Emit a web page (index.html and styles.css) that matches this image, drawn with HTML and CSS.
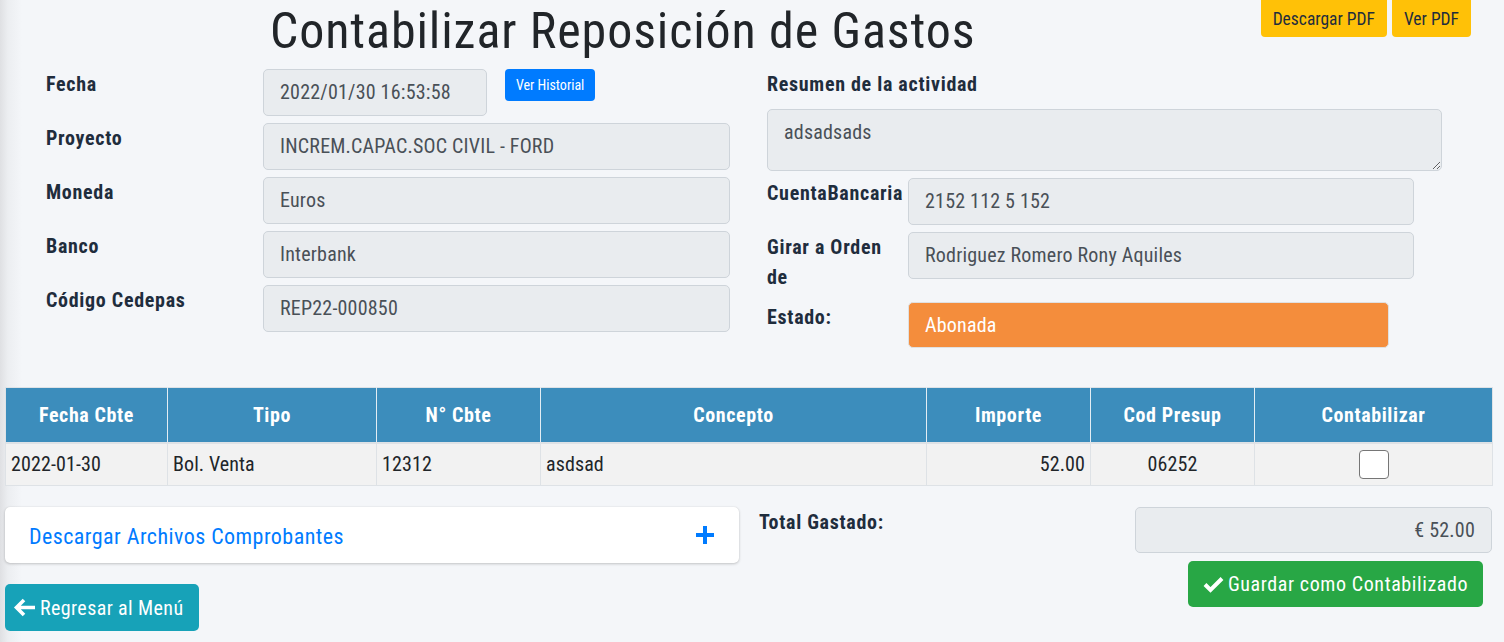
FILE: index.html
```html
<!DOCTYPE html>
<html lang="es">
<head>
<meta charset="utf-8">
<title>Contabilizar Reposición de Gastos</title>
<link rel="stylesheet" href="styles.css">
</head>
<body>
<div class="page">
  <header class="top">
    <h1 class="title">Contabilizar Reposición de Gastos</h1>
    <div class="pdf-actions">
      <button class="btn btn-warning">Descargar PDF</button>
      <button class="btn btn-warning">Ver PDF</button>
    </div>
  </header>

  <section class="form">
    <div class="col-left">
      <div class="row">
        <label class="lbl">Fecha</label>
        <div class="field-inline">
          <div class="input input-date">2022/01/30 16:53:58</div>
          <button class="btn btn-primary btn-xs">Ver Historial</button>
        </div>
      </div>
      <div class="row">
        <label class="lbl">Proyecto</label>
        <div class="input">INCREM.CAPAC.SOC CIVIL - FORD</div>
      </div>
      <div class="row">
        <label class="lbl">Moneda</label>
        <div class="input">Euros</div>
      </div>
      <div class="row">
        <label class="lbl">Banco</label>
        <div class="input">Interbank</div>
      </div>
      <div class="row">
        <label class="lbl">Código Cedepas</label>
        <div class="input">REP22-000850</div>
      </div>
    </div>

    <div class="col-right">
      <label class="lbl lbl-block">Resumen de la actividad</label>
      <textarea class="input textarea" readonly>adsadsads</textarea>
      <div class="row row-r">
        <label class="lbl">CuentaBancaria</label>
        <div class="input input-r">2152 112 5 152</div>
      </div>
      <div class="row row-r">
        <label class="lbl">Girar a Orden de</label>
        <div class="input input-r">Rodriguez Romero Rony Aquiles</div>
      </div>
      <div class="row row-r">
        <label class="lbl">Estado:</label>
        <div class="input input-estado">Abonada</div>
      </div>
    </div>
  </section>

  <table class="tbl">
    <colgroup>
      <col style="width:162px"><col style="width:209px"><col style="width:164px"><col style="width:386px"><col style="width:164px"><col style="width:164px"><col>
    </colgroup>
    <thead>
      <tr>
        <th>Fecha Cbte</th><th>Tipo</th><th>N° Cbte</th><th>Concepto</th><th>Importe</th><th>Cod Presup</th><th>Contabilizar</th>
      </tr>
    </thead>
    <tbody>
      <tr>
        <td>2022-01-30</td><td>Bol. Venta</td><td>12312</td><td>asdsad</td><td class="r">52.00</td><td class="c">06252</td><td class="c"><span class="check"></span></td>
      </tr>
    </tbody>
  </table>

  <section class="bottom">
    <div class="bottom-left">
      <div class="card">
        <span class="card-title">Descargar Archivos Comprobantes</span>
        <svg class="plus" width="18" height="18" viewBox="0 0 18 18"><path d="M9 0v18M0 9h18" stroke="#007bff" stroke-width="4"/></svg>
      </div>
      <button class="btn btn-info btn-lg">
        <svg width="24" height="19" viewBox="0 0 24 19"><path d="M22 9.5H4M11 2L3.5 9.5 11 17" fill="none" stroke="#fff" stroke-width="3.6" stroke-linejoin="miter"/></svg>
        Regresar al Menú
      </button>
    </div>
    <div class="bottom-right">
      <div class="total-row">
        <label class="lbl">Total Gastado:</label>
        <div class="input input-total">€ 52.00</div>
      </div>
      <div class="save-row">
        <button class="btn btn-success btn-lg">
          <svg width="21" height="17" viewBox="0 0 21 17"><path d="M2 8.5l5.5 5.5L19 2.5" fill="none" stroke="#fff" stroke-width="4"/></svg>
          Guardar como Contabilizado
        </button>
      </div>
    </div>
  </section>
</div>
</body>
</html>
```
FILE: styles.css
```css
html, body {
  margin: 0;
  height: 100%;
}
body {
  background: linear-gradient(to right, #dfe0e3 0, #eceef1 8px, #f4f6f9 22px);
  font-family: "Roboto Condensed", "Liberation Sans Narrow", "Liberation Sans", sans-serif;
  font-size: 20px;
  color: #212529;
}
.page {
  padding: 0 12px 0 5px;
}
.top {
  display: flex;
  justify-content: space-between;
  align-items: flex-start;
  height: 69px;
}
.title {
  margin: 0 0 0 265px;
  padding-top: 1px;
  font-size: 50px;
  font-weight: 400;
  line-height: 60px;
  color: #212529;
  letter-spacing: 0.9px;
}
.pdf-actions {
  display: flex;
  gap: 5px;
  margin-right: 21px;
}
.btn {
  border: 0;
  font-family: inherit;
  cursor: pointer;
  display: inline-flex;
  align-items: center;
  justify-content: center;
}
.btn-warning {
  background: #ffc107;
  color: #1f2d3d;
  font-size: 17.5px;
  height: 37px;
  padding: 0 12px;
  border-radius: 0 0 4px 4px;
}
.btn-primary {
  background: #007bff;
  color: #fff;
}
.btn-xs {
  font-size: 14px;
  height: 32px;
  padding: 0 11px;
  border-radius: 4px;
  margin-left: 18px;
}
.form {
  display: flex;
  padding-left: 41px;
  gap: 37px;
  height: 318px;
}
.col-left {
  width: 684px;
}
.col-right {
  width: 674px;
  display: flex;
  flex-direction: column;
}
.row {
  display: flex;
  align-items: flex-start;
}
.lbl {
  display: block;
  box-sizing: border-box;
  width: 217px;
  flex: none;
  font-weight: 700;
  line-height: 30px;
  margin-bottom: 10px;
  color: #1f2d3d;
  letter-spacing: 0.7px;
}
.row-r .lbl {
  width: 141px;
  padding-right: 16px;
  white-space: normal;
}
.lbl-block {
  width: auto;
}
.input {
  box-sizing: border-box;
  flex: 1;
  height: 47px;
  margin-bottom: 7px;
  background: #e9ecef;
  border: 1px solid #ced4da;
  border-radius: 5px;
  padding: 0 16px;
  color: #495057;
  line-height: 45px;
  white-space: nowrap;
  letter-spacing: 0.2px;
}
.field-inline {
  display: flex;
  align-items: flex-start;
  flex: 1;
}
.input-date {
  flex: none;
  width: 224px;
}
.textarea {
  flex: none;
  width: 675px;
  height: 62px;
  font-family: inherit;
  font-size: 20px;
  line-height: 30px;
  padding: 7px 16px;
  resize: vertical;
  outline: none;
}
.input-r {
  flex: none;
  width: 506px;
}
.input-estado {
  flex: none;
  width: 481px;
  height: 46px;
  background: #f48d3c;
  border-color: #e0e0e0;
  color: #fff;
  line-height: 44px;
}
.tbl {
  width: 1488px;
  border-collapse: collapse;
  table-layout: fixed;
  border: 1px solid #dee2e6;
}
.tbl th {
  background: #3c8dbc;
  color: #fff;
  font-weight: 700;
  height: 55px;
  padding: 0 5px;
  text-align: center;
  border-left: 1px solid #e3edf4;
  border-bottom: 2px solid #dee2e6;
  box-sizing: border-box;
  letter-spacing: 0.6px;
}
.tbl th:first-child {
  border-left: 0;
}
.tbl td {
  background: #f2f2f2;
  height: 43px;
  padding: 0 5px;
  border: 1px solid #dee2e6;
  box-sizing: border-box;
  color: #212529;
  letter-spacing: 0.1px;
}
.tbl td.r { text-align: right; }
.tbl td.c { text-align: center; }
.check {
  display: inline-block;
  width: 28px;
  height: 27px;
  background: #fff;
  border: 1px solid #767676;
  border-radius: 4px;
  vertical-align: middle;
}
.bottom {
  display: flex;
  margin-top: 21px;
}
.bottom-left {
  width: 734px;
  flex: none;
}
.card {
  box-sizing: border-box;
  height: 56px;
  background: #fff;
  border-radius: 5px;
  box-shadow: 0 0 1px rgba(0,0,0,.125), 0 1px 3px rgba(0,0,0,.2);
  display: flex;
  align-items: center;
  justify-content: space-between;
  padding: 0 25px 0 24px;
  margin-bottom: 21px;
}
.card-title {
  color: #007bff;
  font-size: 22px;
  letter-spacing: 0.45px;
  padding-top: 2px;
}
.btn-lg {
  height: 47px;
  border-radius: 5px;
  font-size: 20px;
  color: #fff;
  gap: 4px;
  letter-spacing: 0.4px;
}
.btn-info {
  background: #17a2b8;
  width: 194px;
  padding: 0 8px;
  justify-content: flex-start;
  gap: 3px;
}
.bottom-right {
  flex: 1;
  padding-left: 20px;
}
.total-row {
  display: flex;
  justify-content: space-between;
  align-items: flex-start;
}
.total-row .lbl {
  width: auto;
}
.input-total {
  flex: none;
  width: 357px;
  height: 46px;
  line-height: 44px;
  text-align: right;
  margin-bottom: 8px;
}
.save-row {
  display: flex;
  justify-content: flex-end;
  padding-right: 9px;
}
.btn-success {
  background: #28a745;
  width: 295px;
  height: 46px;
  letter-spacing: 0.6px;
}
```
